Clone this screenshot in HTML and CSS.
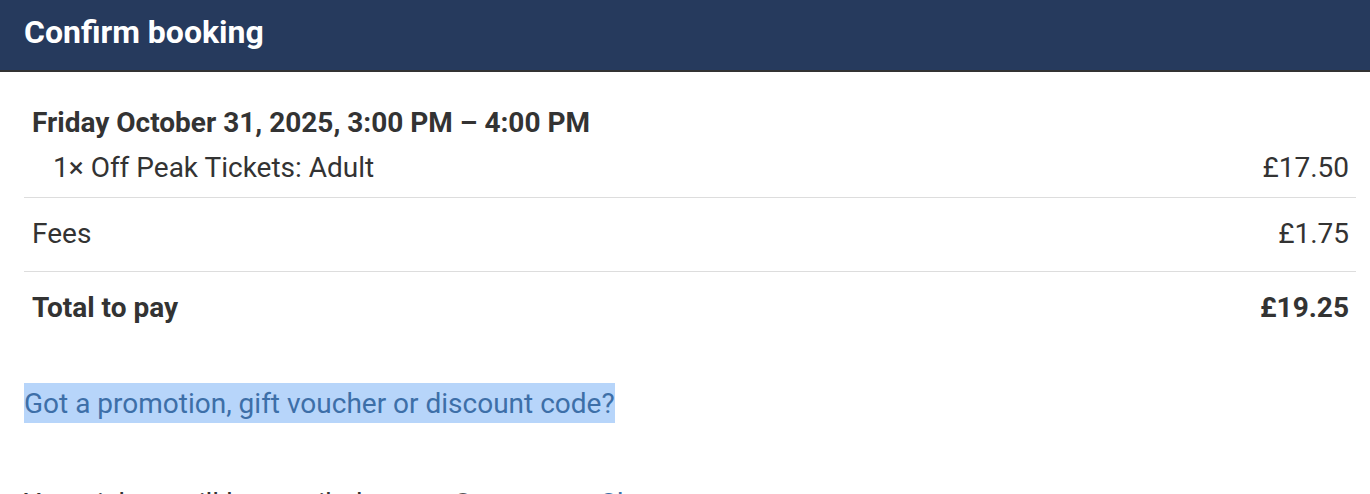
FILE: index.html
```html
<!DOCTYPE html>
<html lang="en">
<head>
<meta charset="utf-8">
<title>Confirm booking</title>
<link rel="stylesheet" href="styles.css">
</head>
<body>
<header class="topbar">
  <h1 class="topbar-title">Confirm booking</h1>
</header>
<main class="content">
  <section class="summary">
    <div class="row row-first">
      <div class="slot-title">Friday October 31, 2025, 3:00 PM – 4:00 PM</div>
      <div class="line-item">
        <span class="item-name">1× Off Peak Tickets: Adult</span>
        <span class="price">£17.50</span>
      </div>
    </div>
    <div class="row">
      <div class="line-item">
        <span>Fees</span>
        <span class="price">£1.75</span>
      </div>
    </div>
    <div class="row row-total">
      <div class="line-item">
        <span>Total to pay</span>
        <span class="price">£19.25</span>
      </div>
    </div>
  </section>
  <p class="promo"><a class="promo-link" href="#">Got a promotion, gift voucher or discount code?</a></p>
  <p class="email-note">Your tickets will be emailed to <span class="email">Sam</span> <a class="change-link" href="#">Change</a></p>
</main>
</body>
</html>
```
FILE: styles.css
```css
html, body {
  margin: 0;
  padding: 0;
  background: #ffffff;
}
body {
  font-family: Roboto, "Liberation Sans", Arial, sans-serif;
  color: #333333;
  font-size: 28px;
  line-height: 36px;
  overflow: hidden;
}
.topbar {
  background: #263a5d;
  height: 70px;
  border-bottom: 2px solid #333333;
  display: flex;
  align-items: center;
  padding: 0 24px;
}
.topbar-title {
  margin: 0;
  color: #ffffff;
  font-size: 32px;
  font-weight: 700;
  line-height: 40px;
  position: relative;
  top: -3px;
}
.content {
  padding: 15px 14px 0 24px;
}
.row {
  padding: 18px 7px 19px 8px;
  border-bottom: 1px solid #dddddd;
}
.row-first {
  padding-bottom: 11px;
}
.row-total {
  border-bottom: none;
  font-weight: 700;
}
.slot-title {
  font-weight: 700;
  margin-bottom: 9px;
}
.line-item {
  display: flex;
  justify-content: space-between;
}
.item-name {
  padding-left: 21px;
}
.promo {
  margin: 39px 0 0;
  line-height: 40px;
}
.promo-link {
  color: #3d6fa8;
  text-decoration: none;
  background: #b7d5fa;
  padding: 4px 0 3px;
}
.email-note {
  margin: 62px 0 0;
}
.email {
  color: #555555;
  margin-left: 53px;
}
.change-link {
  color: #3d6fa8;
  text-decoration: none;
  margin-left: 81px;
}
```
